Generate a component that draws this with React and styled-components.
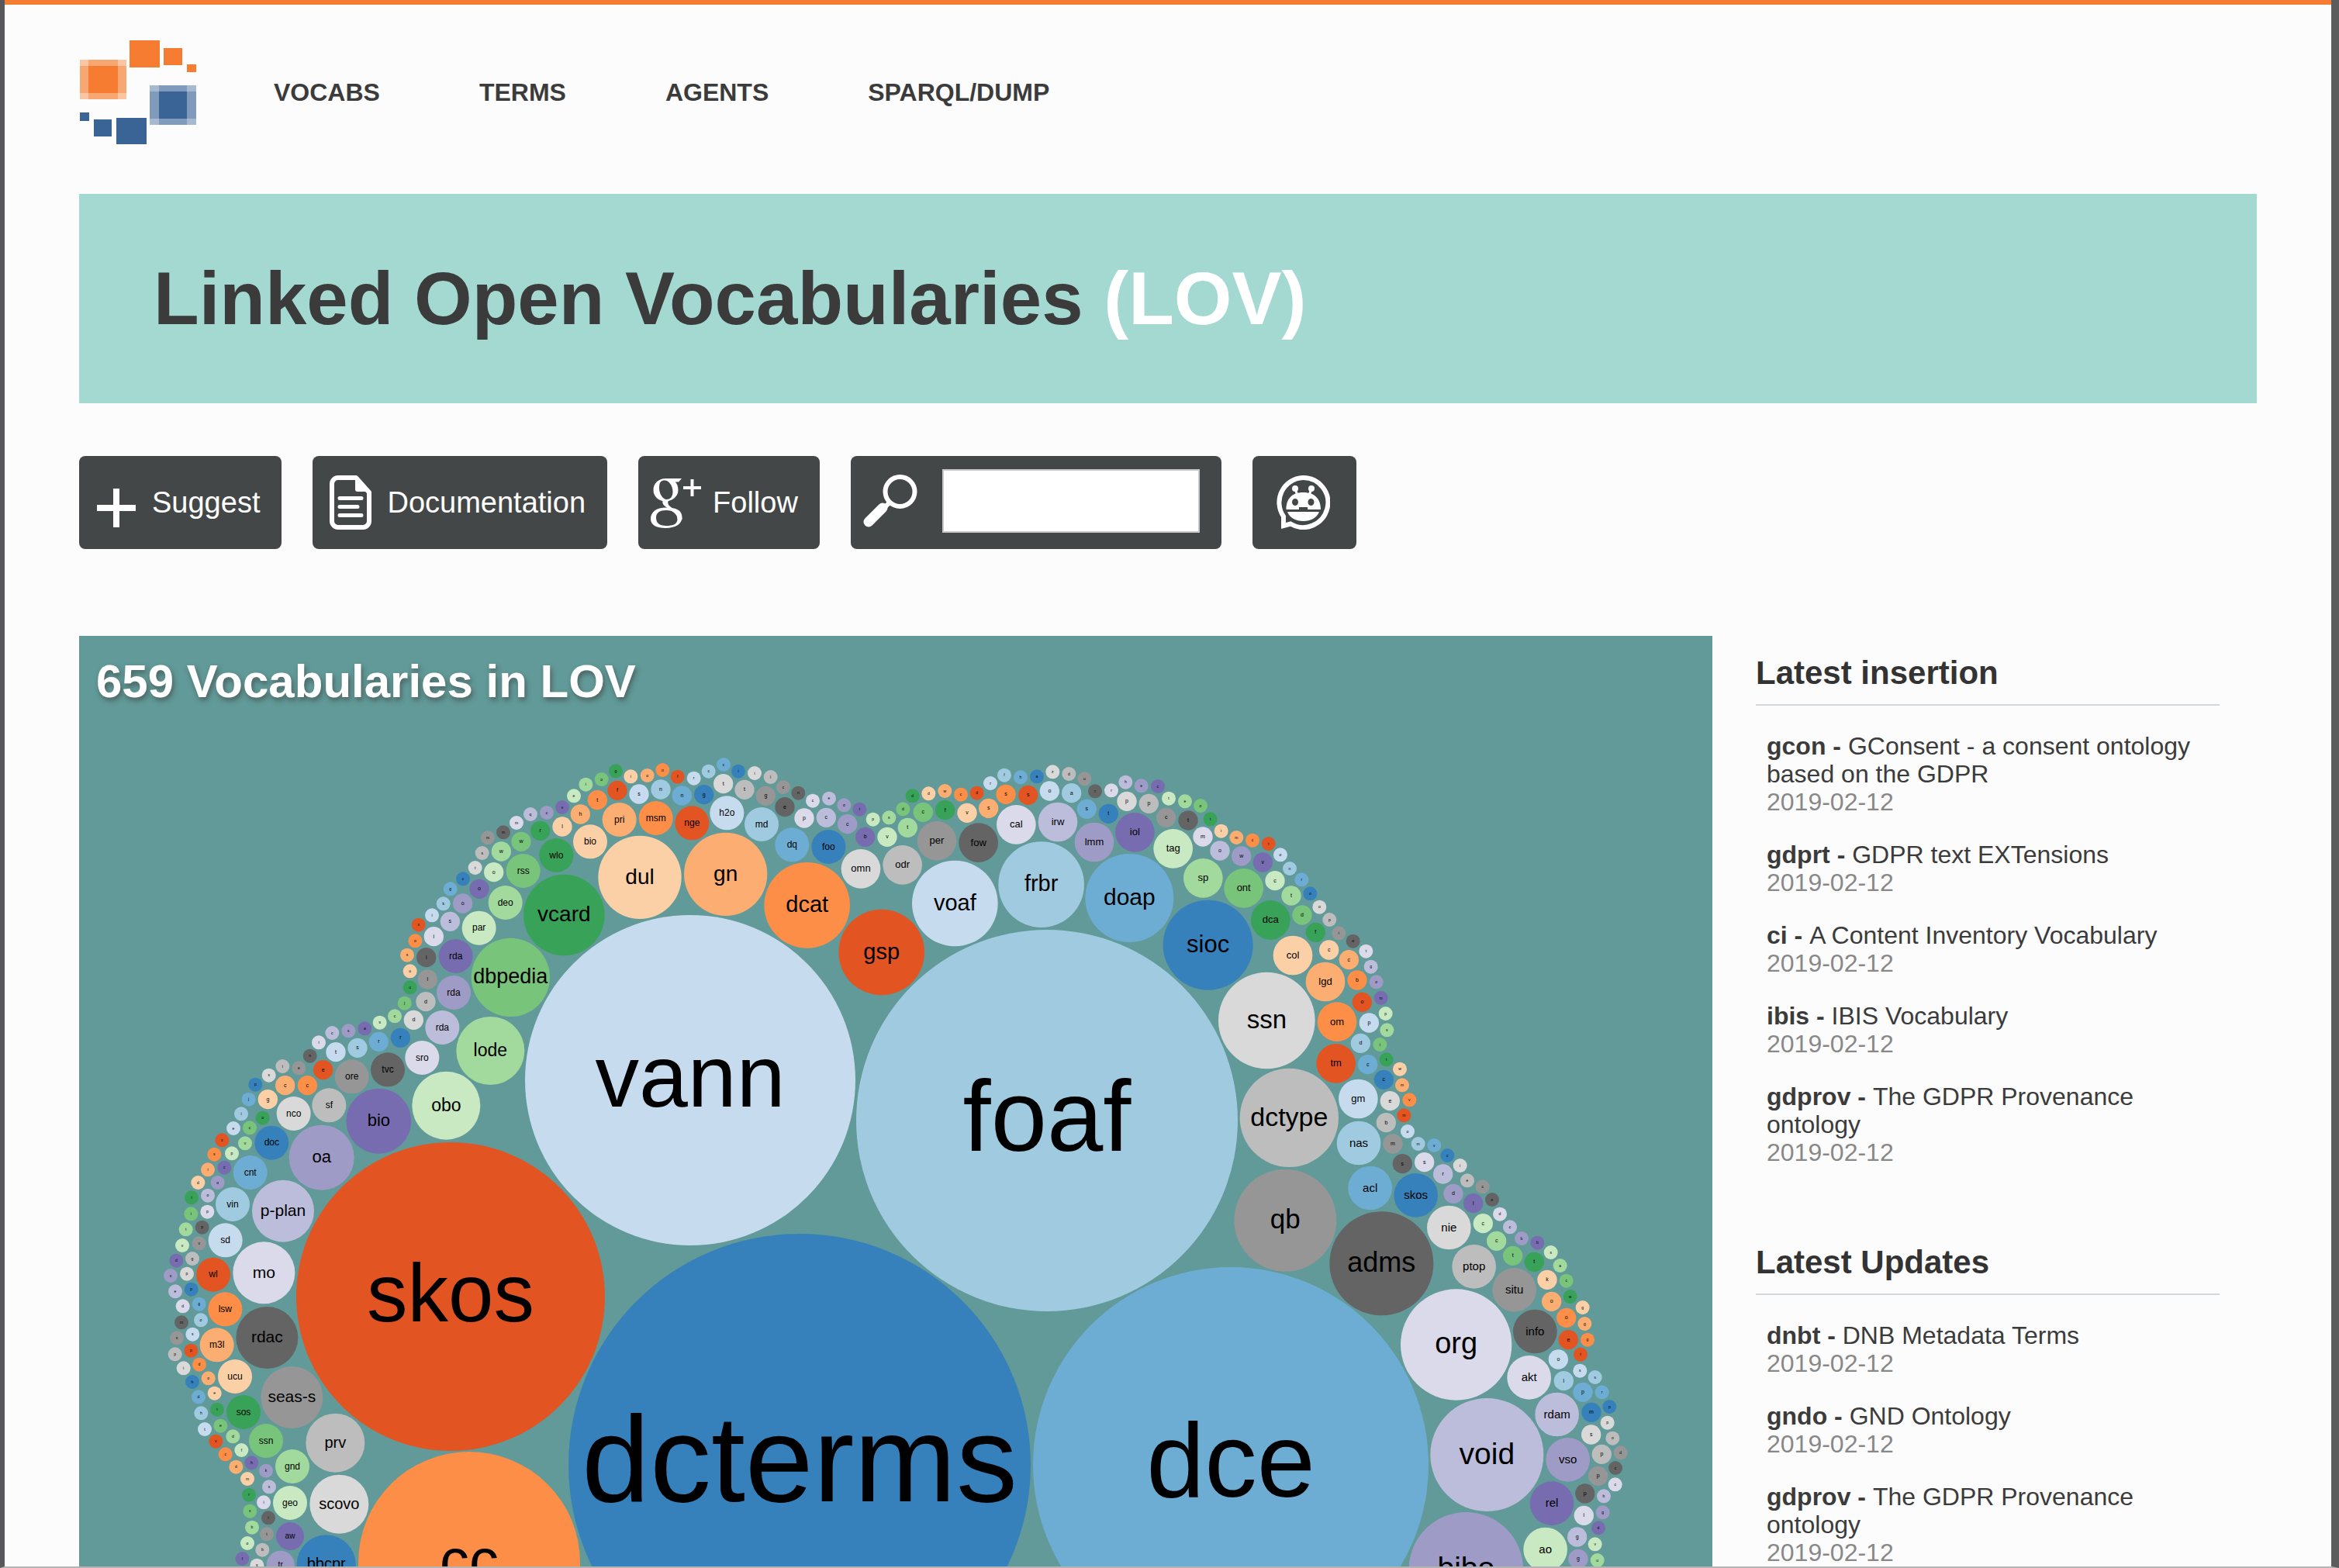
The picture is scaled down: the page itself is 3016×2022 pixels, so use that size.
import React from "react";
import styled, { createGlobalStyle } from "styled-components";

const GlobalStyle = createGlobalStyle`
  * { box-sizing: border-box; }
  body {
    margin: 0;
    background: #fcfcfc;
    color: #3b3b3b;
    font-family: "Liberation Sans", Arial, Helvetica, sans-serif;
    font-size: 32px;
    line-height: 36px;
  }
  a { color: inherit; text-decoration: none; }
`;

const Frame = styled.div`
  height: 100vh;
  overflow: hidden;
  background: #fcfcfc;
  border-left: 6px solid #58585a;
  border-right: 10px solid #5c5c5c;
  border-bottom: 2px solid #b4b4b4;
`;

const Page = styled.div`
  border-top: 6px solid #f57c31;
  padding: 0 96px;
`;

const Header = styled.header`
  display: flex;
  align-items: center;
  gap: 100px;
  padding: 45px 0 63px;
`;

const LogoLink = styled.a`
  display: block;
  svg { display: block; }
`;

const Nav = styled.nav`
  display: flex;
  gap: 128px;
  font-weight: bold;
`;

const Banner = styled.div`
  display: flex;
  align-items: center;
  height: 270px;
  padding: 0 96px;
  background: #a4d9d1;
`;

const BannerTitle = styled.h1`
  margin: 0;
  font-size: 96px;
  line-height: 110px;
  span { color: #fff; }
`;

const Toolbar = styled.div`
  display: flex;
  gap: 40px;
  padding: 68px 0 112px;
`;

const Button = styled.button`
  display: flex;
  align-items: center;
  gap: ${(p) => p.$gap || 20}px;
  height: 120px;
  padding: 0 28px 0 ${(p) => p.$left || 22}px;
  border: 0;
  border-radius: 8px;
  background: #444747;
  color: #fff;
  font: inherit;
  font-size: 38px;
  svg { display: block; flex: none; }
`;

const IconButton = styled(Button)`
  padding: 0 34px 0 30px;
`;

const SearchBox = styled.form`
  display: flex;
  align-items: center;
  gap: 32px;
  height: 120px;
  padding: 0 28px 4px 16px;
  border-radius: 8px;
  background: #444747;
  svg { display: block; }
`;

const SearchInput = styled.input`
  width: 332px;
  height: 82px;
  border: 2px solid #c8c8c8;
  border-radius: 0;
  background: #fff;
  font: inherit;
  font-size: 38px;
  padding: 0 12px;
`;

const Columns = styled.main`
  display: grid;
  grid-template-columns: 3fr 1fr;
`;

const Chart = styled.section`
  padding-top: 24px;
  background: #619a98;
  svg { display: block; width: 100%; height: auto; }
`;

const ChartTitle = styled.h2`
  margin: 0;
  padding-left: 22px;
  color: #fff;
  font-size: 60px;
  line-height: 70px;
  text-shadow: 2px 4px 6px rgba(60, 60, 60, 0.6);
`;

const Sidebar = styled.aside`
  padding: 24px 48px 0 56px;
`;

const SideTitle = styled.h3`
  margin: 0;
  padding-bottom: 16px;
  border-bottom: 2px solid #d1d7db;
  color: #333;
  font-size: 42px;
  line-height: 48px;
`;

const VocabList = styled.ul`
  display: flex;
  flex-direction: column;
  gap: 32px;
  margin: 34px 0 100px;
  padding: 0 0 0 14px;
  list-style: none;
`;

const Date = styled.div`
  color: #888;
`;

const palette = {
  b0: "#3681bb", b1: "#6dadd4", b2: "#a0cae0", b3: "#c7dbee",
  o0: "#e25522", o1: "#fc8e47", o2: "#fbad72", o3: "#fcd0a6",
  g0: "#38a259", g1: "#79c47b", g2: "#a2d99d", g3: "#c8e9c2",
  p0: "#776cb0", p1: "#9f9bc7", p2: "#bcbddb", p3: "#dadaea",
  k0: "#646464", k1: "#969696", k2: "#bdbdbd", k3: "#d9d9d9",
};

/* Each cluster has an origin, a unit, and bubbles grouped by radius:
   "x y colour label" separated by commas. */
const clusters = [
  {
    x: 0, y: 0, unit: 1,
    bubbles: {
      213: "890 1393 b3 vann",
      246: "1350 1445 b2 foaf",
      199: "581 1672 o0 skos",
      298: "1031 1889 b0 dcterms",
      255: "1587 1889 b1 dce",
      143: "605 2015 o1 cc",
    },
  },
  {
    x: 600, y: 960, unit: 3,
    bubbles: {
      27: "582 103 g0 g,640 124 o3 i,704 120 o2 o,763 99 o1 o,821 125 o0 f,884 131 b3 r,941 104 b2 c,999 78 b1 c,1056 104 b0 i,1119 111 k3 i,1181 126 k2 l,1230 165 k1 c,1288 188 k0 n,527 135 g1 o,466 155 g2 i,420 199 g3 e,375 243 p0 v,315 264 p1 c,252 270 p2 q,198 303 p3 m,147 340 k0 m,87 361 k1 m,65 420 k2 s,38 477 k3 t",
      38: "588 178 o0 f,511 215 o1 t,672 192 b3 s,756 174 b2 n,838 198 b1 n,923 194 b0 g,998 152 k3 t,1080 175 k2 t,1162 199 k1 g,1236 242 k0 e,1311 285 p3 p,445 270 o2 h,375 318 o3 l,290 334 g0 r,216 376 g1 w,139 414 g2 w,110 494 g3 o,54 559 p0 o",
      66: "596 291 o2 pri,737 285 o1 msm,877 304 o0 nge,1012 265 b3 h2o,1146 309 b2 md,483 376 o3 bio,352 429 g0 wlo,224 489 g1 rss,155 612 g2 deo,53 710 g3 par,1264 388 b1 dq",
      161: "675 514 o3 dul,1007 502 o2 gn",
      157: "382 660 g0 vcard",
    },
  },
  {
    x: 1000, y: 960, unit: 3,
    bubbles: {
      27: "144 218 p3 c,207 209 p2 e,265 235 p1 o,325 251 p0 t,377 290 g3 p,439 283 g2 s,493 250 g1 d,530 199 g0 d,592 190 o3 d,655 180 o2 w,717 194 o1 c,779 188 o0 d,831 150 b3 r,885 119 b2 f,948 127 b1 h,1011 124 b0 a,1072 106 k3 z,1135 114 k2 d,1195 133 k1 u,1236 181 k0 r,1299 178 p3 r",
      38: "196 283 p2 c,278 308 p1 c,347 358 p0 b,432 358 g3 v,511 322 g2 t,571 262 g1 c,656 254 g0 f,741 265 o3 v,824 247 o2 s,891 193 o1 s,977 196 o0 s,1060 180 b3 o,1145 188 b2 a,1204 250 b1 s,1288 268 b0 t",
      66: "205 396 b0 foo",
      76: "330 481 k3 omn,491 466 k2 odr,624 373 k1 per,785 380 k0 fow,931 310 p3 cal,1092 300 p2 irw,1233 378 p1 lmm",
      166: "122 622 o1 dcat,410 804 o0 gsp,694 615 b3 voaf,1028 542 b2 frbr",
    },
  },
  {
    x: 1400, y: 960, unit: 3,
    bubbles: {
      27: "154 146 p2 h,215 160 p1 e,279 162 p0 c,321 209 g3 t,384 220 g2 e,444 237 g1 o,482 289 g0 t,524 335 o3 i,583 360 o2 m,645 371 o1 c,707 384 o0 t,753 427 b3 o,789 480 b2 n,835 523 b1 r,868 577 b0 o,904 629 k3 o,943 678 k2 p,979 730 k1 i,1034 761 k0 o,1084 800 p3 t,1103 860 p2 g,1124 919 p1 o,1142 981 p0 m,1160 1041 g3 p,1165 1105 g2 s,1138 1161 g1 i",
      38: "159 220 k3 p,244 229 k2 p,311 283 k1 c,396 294 k0 t,453 357 p3 m,519 411 p2 o,602 432 p1 w,685 456 p0 v,732 527 g3 c,795 585 g2 t,837 660 g1 d,889 727 g0 f,941 795 o3 c,1018 833 o2 c,1050 912 o1 b,1069 997 o0 o,1096 1077 b3 p,1063 1156 b2 d",
      76: "190 340 p0 iol,338 403 g3 tag,454 517 g2 sp,611 556 g1 ont,715 679 g0 dca,801 816 o3 col,927 918 o2 lgd,972 1073 o1 om",
      171: "169 594 b1 doap",
      174: "473 776 b0 sioc",
      187: "700 1068 k3 ssn",
    },
  },
  {
    x: 1640, y: 1330, unit: 3,
    bubbles: {
      27: "443 109 g0 t,495 146 o3 w,504 208 o2 m,532 265 o1 v,511 325 o0 m,525 387 b3 o,566 435 b2 m,628 441 b1 v,679 480 b0 c,728 519 k3 i,756 577 k2 e,815 601 k1 c,852 651 k0 e,882 707 p3 d,921 757 p2 c,966 801 p1 b,1027 818 p0 b,1079 855 g3 s,1115 906 g2 a,1139 965 g1 c,1154 1026 g0 w",
      38: "371 128 b1 c,433 187 b0 c,457 269 k3 e,442 353 k2 b,468 435 k1 m,505 512 k0 s,590 506 p3 s,662 552 p2 r,702 628 p1 d,779 665 p0 l,817 743 g3 c,869 811 g2 c,932 868 g1 t,1015 892 g0 t,1065 961 o3 k",
      76: "248 124 o0 tm,334 261 b3 gm",
      85: "336 432 b2 nas,380 606 b1 acl,557 634 b0 skos,685 759 k3 nie,782 910 k2 ptop,938 1000 k1 situ",
      191: "67 334 k2 dctype",
      198: "52 731 k1 qb",
      201: "424 898 k0 adms",
    },
  },
  {
    x: 1800, y: 1620, unit: 3,
    bubbles: {
      27: "722 198 o3 g,730 261 o2 g,741 323 o1 g,714 380 o0 t,712 443 b3 s,770 468 b2 s,797 526 b1 r,826 582 b0 p,818 644 k3 p,838 704 k2 o,869 760 k1 d,849 819 k0 c,848 883 p3 c,804 928 p2 b,800 991 p1 g,783 1051 p0 d,770 1114 g3 v,779 1176 g2 u",
      38: "602 175 o2 o,659 238 o1 o,667 323 o0 e,628 399 b3 o,649 482 b2 l,723 526 b1 p,756 604 b0 m,755 690 k3 s,796 766 k2 p,782 850 k1 p,731 918 k0 p,727 1003 p3 i,701 1086 p2 g,705 1171 p1 g",
      85: "538 291 k0 info,515 469 p3 akt,623 612 p2 rdam,665 787 p1 vso,603 956 p0 rel,578 1134 g3 ao",
      215: "233 342 p3 org",
      219: "352 768 p2 void",
      221: "271 1211 p1 bibo",
    },
  },
  {
    x: 480, y: 1050, unit: 3,
    bubbles: {
      27: "351 250 b0 c,302 289 b1 g,275 346 b2 k,231 391 b3 i,179 428 o0 x,166 490 o1 o,135 545 o2 s,146 607 o3 u,146 670 g0 u,125 731 g1 j,87 781 g2 c,29 806 g3 s",
      38: "350 345 p1 o,301 415 p2 s,238 473 p3 i,209 554 k0 l,214 639 k1 l,207 725 k2 d,160 796 k3 d,109 865 b0 r,25 880 b1 r",
      66: "323 549 p0 rda,315 690 p1 rda,271 825 p2 rda,193 942 p3 sro,60 988 k0 tvc",
      152: "535 631 g1 dbpedia",
      132: "457 915 g2 lode,286 1127 g3 obo",
    },
  },
  {
    x: 200, y: 1330, unit: 3,
    bubbles: {
      27: "685 6 p2 c,748 -2 p1 s,811 -11 p0 a,633 43 p3 i,599 95 k0 n,556 142 k1 e,493 135 k2 i,440 170 k3 s,388 206 b0 p,362 263 b1 j,333 319 b2 i,303 375 b3 e,259 421 o0 x,229 476 o1 s,204 535 o2 i,166 585 o3 d,141 643 g0 i,139 706 g1 i,119 766 g2 t,105 828 g3 v,82 887 p0 d,60 945 p1 s,78 1006 p2 e,416 335 g0 o,366 373 g1 c,348 433 g2 v,297 472 g3 p,268 527 p0 c,242 585 p1 o,204 635 p2 o,202 698 p3 p,182 758 k0 p,170 820 k1 v,144 879 k2 g,123 938 k3 p,140 998 b0 p",
      38: "699 80 b3 t,783 64 b2 s,650 149 o0 e,589 209 o1 c,503 209 o2 c,436 263 o3 g",
      66: "761 175 k1 ore,673 286 k2 sf,536 318 k3 nco,451 431 b0 doc,368 546 b1 cnt,300 669 b2 vin,272 808 b3 sd,225 941 o0 wl",
      126: "865 347 p0 bio,644 488 p1 oa",
      120: "495 695 p2 p-plan,421 934 p3 mo",
    },
  },
  {
    x: 200, y: 1650, unit: 3,
    bubbles: {
      27: "107 103 p3 d,102 166 k0 m,84 226 k1 s,77 289 k2 p,110 343 k3 i,144 396 b0 h,168 454 b1 d,178 517 b2 h,192 579 b3 t,235 626 o0 v,272 676 o1 c,313 725 o2 d,357 771 o3 m,363 833 g0 r,367 896 g1 x,375 959 g2 b,357 1020 g3 o,337 1080 p0 f,170 95 b1 g,177 157 b2 o,145 212 b3 s,139 275 o0 p,171 329 o1 d,206 382 o2 o,230 440 o3 e,240 503 g0 t,253 566 g1 e,301 607 g2 d,334 660 g3 f,373 709 p0 h,429 740 p1 k,441 802 p2 s,420 862 p3 i,438 922 k0 i,432 985 k1 t,415 1046 k2 b,394 1106 k3 s",
      66: "271 115 o1 lsw,239 253 o2 m3l,309 375 o3 ucu,342 513 g0 sos,429 624 g1 ssn,531 723 g2 gnd,522 864 g3 geo",
      54: "522 993 p0 aw,485 1103 p1 tr",
      120: "433 225 k0 rdac,529 456 k1 seas-s",
      114: "697 632 k2 prv,712 869 k3 scovo,662 1102 b0 bbcpr",
    },
  },
];

const bubbles = clusters.flatMap((c) =>
  Object.entries(c.bubbles).flatMap(([radius, list]) =>
    list.split(",").map((entry) => {
      const [x, y, color, label] = entry.split(" ");
      const r = Number(radius) / c.unit;
      return {
        cx: c.x + Number(x) / c.unit,
        cy: c.y + Number(y) / c.unit,
        r,
        label,
        fill: palette[color],
        size: Math.round(r * 0.53),
      };
    })
  )
);

function BubbleChart() {
  return (
    <svg viewBox="102 914 2106 1300" role="img" aria-label="Vocabularies by number of incoming links">
      {bubbles.map((b, i) => (
        <g key={i}>
          <circle cx={b.cx} cy={b.cy} r={b.r} fill={b.fill} />
          <text x={b.cx} y={b.cy + b.size * 0.3} fontSize={b.size} textAnchor="middle" fill="#000">
            {b.label}
          </text>
        </g>
      ))}
    </svg>
  );
}

function Logo() {
  return (
    <svg width="151" height="136" viewBox="102 52 151 136" aria-hidden="true">
      <rect x="103" y="78" width="60" height="51" fill="#fac6a2" />
      <path d="M114 78h38v51h-38zM103 86h60v35h-60z" fill="#f7a872" />
      <rect x="114" y="86" width="38" height="35" fill="#f57c31" />
      <path d="M167 53h39v35h-39zM211 63h24v22h-24zM241 84h12v10h-12z" fill="#f57c31" />
      <rect x="193" y="111" width="60" height="51" fill="#a7b9d1" />
      <path d="M205 111h36v51h-36zM193 119h60v35h-60z" fill="#7f9aba" />
      <rect x="205" y="119" width="36" height="35" fill="#3a6495" />
      <path d="M103 146h12v11h-12zM121 155h23v22h-23zM150 153h39v34h-39z" fill="#3a6495" />
    </svg>
  );
}

function PlusIcon() {
  return (
    <svg width="52" height="64" viewBox="0 0 52 64" aria-hidden="true">
      <path d="M26 14v50M1 39h50" stroke="#fff" strokeWidth="8" />
    </svg>
  );
}

function DocumentIcon() {
  return (
    <svg width="54" height="70" viewBox="0 0 54 70" aria-hidden="true">
      <path
        d="M11 3H34L51 22V59a8 8 0 0 1-8 8H11a8 8 0 0 1-8-8V11a8 8 0 0 1 8-8z"
        fill="none" stroke="#fff" strokeWidth="6" strokeLinejoin="round"
      />
      <path d="M33 3v15a3 3 0 0 0 3 3h16z" fill="#fff" />
      <path d="M13 29.5h28M13 40.5h23M13 51.5h28" stroke="#fff" strokeWidth="5" strokeLinecap="round" />
    </svg>
  );
}

function GooglePlusIcon() {
  return (
    <svg width="66" height="70" viewBox="0 0 66 70" aria-hidden="true" fill="#fff">
      <path fillRule="evenodd" d="M20 4C9 4 3.500 11 3.500 19S10 33.500 19 33.500 35.500 27 35.500 19 31 4 20 4zM18 6.500C24 6.500 28.500 14 28.500 21S25 31 20.500 31 11 24 11 16.500 13 6.500 18 6.500z" />
      <path d="M20 4h20l-4 4.500H26z" />
      <path d="M16 32h7c-2 5 0 7 6 11s12 7 11.500 14l-6-1c0-5-4-8-10-12s-11-7-8.500-12z" />
      <path fillRule="evenodd" d="M20 41.500C7 41.500 0 47.500 0 56S8 68 19.500 68 40.500 63 40.500 54 33 41.500 20 41.500zM20 45C29 45 34.500 49 34.500 56S29 65 20 65 7 61 7 54.500 12 45 20 45z" />
      <path d="M51.500 5h4v9h9.500v4h-9.500v9h-4v-9H42v-4h9.500z" />
    </svg>
  );
}

function SearchIcon() {
  return (
    <svg width="70" height="70" viewBox="0 0 70 70" aria-hidden="true" stroke="#fff" fill="none">
      <circle cx="47.500" cy="23" r="19" strokeWidth="6" />
      <path d="M35 36l-8 8" strokeWidth="6" />
      <path d="M25 44L7 62" strokeWidth="13" strokeLinecap="round" />
    </svg>
  );
}

function RobotIcon() {
  return (
    <svg width="70" height="70" viewBox="0 0 70 70" aria-hidden="true" fill="#fff">
      <path
        d="M35 3a32 32 0 1 1-16 59.500L10 65V53A32 32 0 0 1 35 3z"
        fill="none" stroke="#fff" strokeWidth="6"
      />
      <circle cx="25" cy="17" r="4" />
      <circle cx="46" cy="17" r="4" />
      <path d="M25 17l3 9M46 17l-3 9" stroke="#fff" strokeWidth="3" />
      <path
        fillRule="evenodd"
        d="M13.500 44C13.500 31 20 22 35.500 22S58 31 58 44H41v-3H30v3zM25 30a4 4.500 0 1 0 0 9 4 4.500 0 0 0 0-9zM45.500 30a4 4.500 0 1 0 0 9 4 4.500 0 0 0 0-9z"
      />
      <path d="M15 47h41c-3 8-11 12-20.500 12S18 55 15 47z" />
    </svg>
  );
}

const insertions = [
  ["gcon", "GConsent - a consent ontology based on the GDPR"],
  ["gdprt", "GDPR text EXTensions"],
  ["ci", "A Content Inventory Vocabulary"],
  ["ibis", "IBIS Vocabulary"],
  ["gdprov", "The GDPR Provenance ontology"],
];

const updates = [
  ["dnbt", "DNB Metadata Terms"],
  ["gndo", "GND Ontology"],
  ["gdprov", "The GDPR Provenance ontology"],
];

function VocabSection({ title, items }) {
  return (
    <section>
      <SideTitle>{title}</SideTitle>
      <VocabList>
        {items.map(([prefix, name]) => (
          <li key={prefix}>
            <a href={"#" + prefix}>
              <b>{prefix} - </b>
              {name}
            </a>
            <Date>2019-02-12</Date>
          </li>
        ))}
      </VocabList>
    </section>
  );
}

export default function App() {
  return (
    <Frame>
      <GlobalStyle />
      <Page>
        <Header>
          <LogoLink href="#home" aria-label="Home">
            <Logo />
          </LogoLink>
          <Nav>
            <a href="#vocabs">VOCABS</a>
            <a href="#terms">TERMS</a>
            <a href="#agents">AGENTS</a>
            <a href="#sparql">SPARQL/DUMP</a>
          </Nav>
        </Header>
        <Banner>
          <BannerTitle>
            Linked Open Vocabularies <span>(LOV)</span>
          </BannerTitle>
        </Banner>
        <Toolbar>
          <Button type="button">
            <PlusIcon />
            Suggest
          </Button>
          <Button type="button">
            <DocumentIcon />
            Documentation
          </Button>
          <Button type="button" $left={16} $gap={14}>
            <GooglePlusIcon />
            Follow
          </Button>
          <SearchBox>
            <label htmlFor="search" aria-label="Search">
              <SearchIcon />
            </label>
            <SearchInput id="search" type="text" />
          </SearchBox>
          <IconButton type="button" aria-label="Chat bot">
            <RobotIcon />
          </IconButton>
        </Toolbar>
        <Columns>
          <Chart>
            <ChartTitle>659 Vocabularies in LOV</ChartTitle>
            <BubbleChart />
          </Chart>
          <Sidebar>
            <VocabSection title="Latest insertion" items={insertions} />
            <VocabSection title="Latest Updates" items={updates} />
          </Sidebar>
        </Columns>
      </Page>
    </Frame>
  );
}
